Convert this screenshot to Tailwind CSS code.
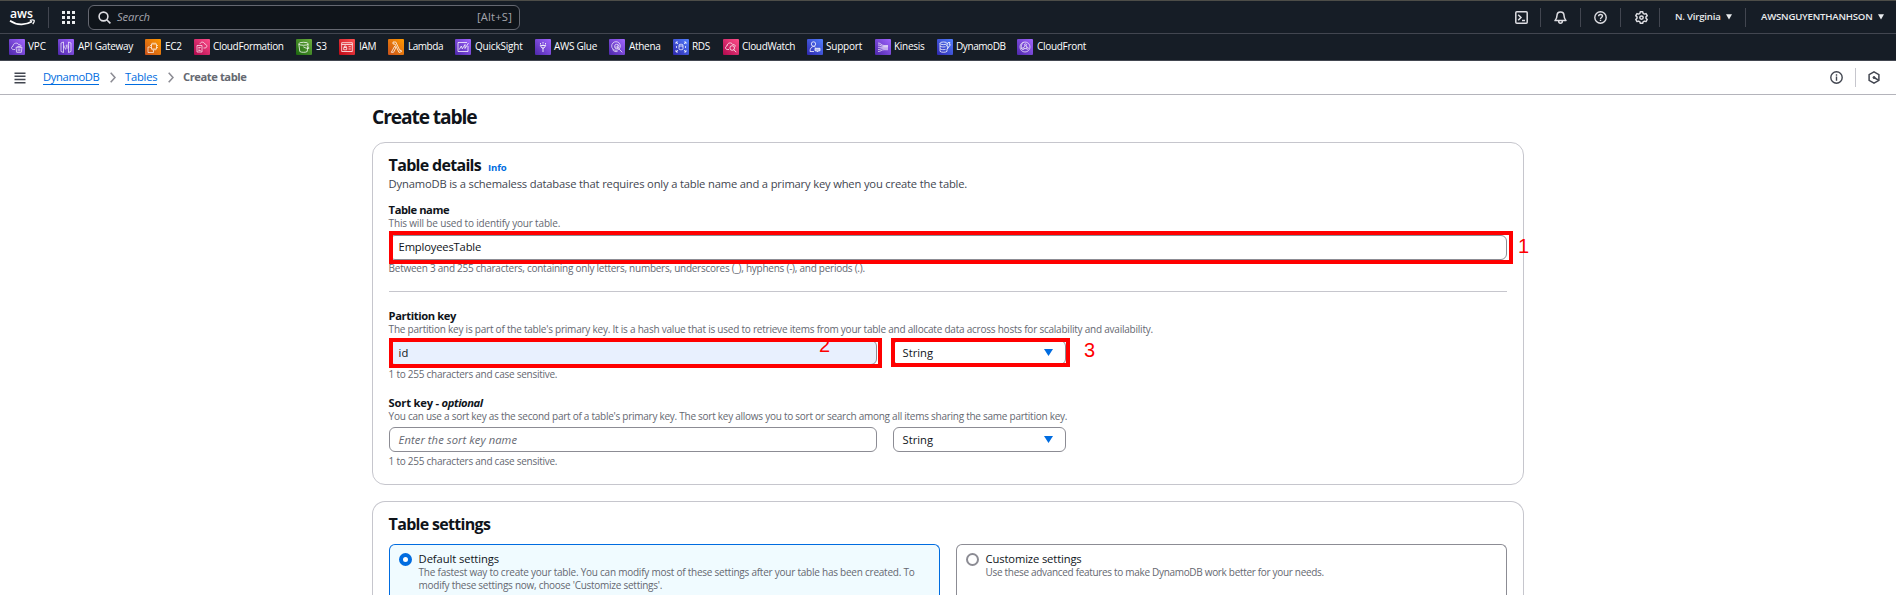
<!DOCTYPE html>
<html lang="en">
<head>
<meta charset="utf-8">
<title>Create table</title>
<script src="https://cdn.jsdelivr.net/npm/@tailwindcss/browser@4"></script>
</head>
<body class="h-[595px] overflow-hidden bg-white font-['Open_Sans',sans-serif] text-[11.2px] leading-4 text-[#0f141a] whitespace-nowrap">

<!-- Top navigation -->
<header class="flex h-[34px] items-center border-t border-b border-t-[#4d4d48] border-b-[#424650] bg-[#161d26] text-[#e9ebed]">
  <svg class="ml-[9px] w-[27px] h-[18px] overflow-visible" viewBox="0 0 27 18" fill="none" stroke="#fff">
    <text x="1" y="10" font-family="Open Sans" font-size="12" font-weight="600" fill="#fff" stroke="none" textLength="23" lengthAdjust="spacingAndGlyphs">aws</text>
    <path d="M1 12.700c6.500 4.600 15.500 4.800 22 .9" stroke-width="1.700"/>
    <path d="M20.800 12.400c1.500-.6 3.600-.6 4.200-.2.400.5-.2 2.600-1.300 4" stroke-width="1.200"/>
  </svg>
  <div class="ml-3 h-[21px] w-px bg-[#424650]"></div>
  <svg class="ml-[13px] size-[13px]" viewBox="0 0 13 13" fill="#e9ebed"><path d="M0 0h3v3H0zM5 0h3v3H5zM10 0h3v3h-3zM0 5h3v3H0zM5 5h3v3H5zM10 5h3v3h-3zM0 10h3v3H0zM5 10h3v3H5zM10 10h3v3h-3z"/></svg>
  <div class="ml-[13px] flex h-[25px] w-[432px] items-center rounded-[6px] border border-[#656871] bg-[#0f141a] pr-[7px] pl-[9px]">
    <svg class="size-[13px]" viewBox="0 0 13 13" fill="none" stroke="#dedee3" stroke-width="1.600"><circle cx="5.500" cy="5.500" r="4.400"/><path d="M8.700 8.700l3.700 3.700"/></svg>
    <span class="ml-[6px] italic text-[#a4a4ad] tracking-[-0.08px]">Search</span>
    <span class="ml-auto text-[#a4a4ad] tracking-[0.18px]">[Alt+S]</span>
  </div>
  <svg class="ml-auto size-[13px]" viewBox="0 0 13 13" fill="none" stroke="#dedee3" stroke-width="1.500"><rect x=".8" y=".8" width="11.400" height="11.400" rx="1"/><path d="M3.200 3.700l2.800 2.800-2.800 2.800M7 9.500h3"/></svg>
  <div class="ml-3 h-[19px] w-px bg-[#424650]"></div>
  <svg class="ml-[13px] size-[13px]" viewBox="0 0 13 13" fill="none" stroke="#dedee3" stroke-width="1.500" stroke-linejoin="round"><path d="M6.500 .9C4.300 .9 3 2.600 3 4.600c0 2.600-.9 3.600-2 5h11c-1.100-1.400-2-2.400-2-5C10 2.600 8.700 .9 6.500 .9zM4.700 10.200c0 2.600 3.600 2.600 3.600 0"/></svg>
  <div class="ml-[13px] h-[19px] w-px bg-[#424650]"></div>
  <svg class="ml-[13px] size-[13px]" viewBox="0 0 13 13" fill="none" stroke="#dedee3" stroke-width="1.400"><circle cx="6.500" cy="6.500" r="5.700"/><path d="M4.600 5.300c0-2.500 3.900-2.400 3.900-.2 0 1.400-2 1.400-2 2.900M6.500 8.700v1.400"/></svg>
  <div class="ml-[13px] h-[19px] w-px bg-[#424650]"></div>
  <svg class="ml-[14px] size-[13px]" viewBox="0 0 13 13" fill="none" stroke="#dedee3" stroke-width="1.500" stroke-linejoin="round"><path d="M5.300 .8h2.400l.4 1.600 1.300.7 1.600-.5 1.200 2.100-1.200 1.200v1.400l1.200 1.200-1.200 2.100-1.600-.5-1.300.7-.4 1.500H5.300l-.4-1.500-1.300-.7-1.600.5L.8 8.500 2 7.300V5.900L.8 4.700 2 2.600l1.600.5 1.300-.7z"/><circle cx="6.500" cy="6.600" r="1.700"/></svg>
  <div class="ml-[11px] h-[19px] w-px bg-[#424650]"></div>
  <div class="ml-[15px] flex w-[70px] items-center text-[9.6px] font-semibold"><span class="w-[51px] tracking-[-0.2px]">N. Virginia</span><svg class="h-[6px] w-[6px]" viewBox="0 0 6 6" fill="#e9ebed"><path d="M0 .3h6L3 5.500z"/></svg></div>
  <div class="h-[19px] w-px bg-[#424650]"></div>
  <div class="ml-[15px] mr-[12px] flex w-[123px] items-center text-[9.6px] font-semibold"><span class="w-[117px] tracking-[-0.2px]">AWSNGUYENTHANHSON</span><svg class="h-[6px] w-[6px]" viewBox="0 0 6 6" fill="#e9ebed"><path d="M0 .3h6L3 5.500z"/></svg></div>
</header>

<!-- Favourite services -->
<svg class="absolute size-0">
  <defs>
    <linearGradient id="purple" x1="0" y1="1" x2="1" y2="0"><stop stop-color="#4d27aa"/><stop offset="1" stop-color="#a166ff"/></linearGradient>
    <linearGradient id="orange" x1="0" y1="1" x2="1" y2="0"><stop stop-color="#c8511b"/><stop offset="1" stop-color="#ff9900"/></linearGradient>
    <linearGradient id="pink" x1="0" y1="1" x2="1" y2="0"><stop stop-color="#b0084d"/><stop offset="1" stop-color="#ff4f8b"/></linearGradient>
    <linearGradient id="green" x1="0" y1="1" x2="1" y2="0"><stop stop-color="#1b660f"/><stop offset="1" stop-color="#6cae3e"/></linearGradient>
    <linearGradient id="red" x1="0" y1="1" x2="1" y2="0"><stop stop-color="#bd0816"/><stop offset="1" stop-color="#ff5252"/></linearGradient>
    <linearGradient id="blue" x1="0" y1="1" x2="1" y2="0"><stop stop-color="#2e27ad"/><stop offset="1" stop-color="#527fff"/></linearGradient>
  </defs>
</svg>
<nav class="flex h-[27px] items-center border-b border-[#424650] bg-[#161d26] pl-[9px] text-[10px] font-medium text-white">
  <a class="flex w-[49px] shrink-0 items-center"><svg class="mr-[3px] size-4" viewBox="0 0 16 16" fill="none" stroke="#fff" stroke-opacity=".85" stroke-width=".8"><rect width="16" height="16" rx="1" fill="url(#purple)" stroke="none"/><path d="M6 10.500H4.500C2 10.500 2 7.500 4 7.200 4 4 8.500 3 9.700 5.700c1.500-.3 2.300.4 2.300 1.500M7 8.300h6l-.7 5H7.700zM8 8.300c.5-1.300 3.500-1.300 4 0M9.200 9.500v2.700M10.800 9.500v2.700"/></svg><span class="pb-[2px] tracking-[-0.09px]">VPC</span></a>
  <a class="flex w-[87px] shrink-0 items-center"><svg class="mr-1 size-4" viewBox="0 0 16 16" fill="none" stroke="#fff" stroke-opacity=".85" stroke-width=".8"><rect width="16" height="16" rx="1" fill="url(#purple)" stroke="none"/><path d="M5.500 3L3 4v8.500l2.500 1zM10.500 3L13 4v8.500l-2.500 1zM9 5.500L7.500 10.500M7 6.500L5.800 8 7 9.500M9.300 6.500L10.400 8 9.300 9.500"/></svg><span class="pb-[2px] tracking-[-0.27px]">API Gateway</span></a>
  <a class="flex w-[49px] shrink-0 items-center"><svg class="mr-1 size-4" viewBox="0 0 16 16" fill="none" stroke="#fff" stroke-opacity=".85" stroke-width=".8"><rect width="16" height="16" rx="1" fill="url(#orange)" stroke="none"/><rect x="6.500" y="5" width="5" height="5"/><path d="M5 8H3v5.500h5.500V11M8 5V3.500M10 5V3.500M11.500 6.500H13M11.500 8.500H13M8 10v1.500M10 10v1.500M6.500 6.500H5M6.500 8.500H5"/></svg><span class="pb-[2px] tracking-[-0.35px]">EC2</span></a>
  <a class="flex w-[102px] shrink-0 items-center"><svg class="mr-[3px] size-4" viewBox="0 0 16 16" fill="none" stroke="#fff" stroke-opacity=".85" stroke-width=".8"><rect width="16" height="16" rx="1" fill="url(#pink)" stroke="none"/><path d="M3 6.500h5V13H3zM4.300 8.500h2.400M4.300 10h1.500M4.300 11.500h2.400M6 5C6.500 2.500 10 2.500 10.700 5c2.800.3 2.800 4 .3 4H9.500"/></svg><span class="pb-[2px] tracking-[-0.34px]">CloudFormation</span></a>
  <a class="flex w-[43px] shrink-0 items-center"><svg class="mr-1 size-4" viewBox="0 0 16 16" fill="none" stroke="#fff" stroke-opacity=".85" stroke-width=".9"><rect width="16" height="16" rx="1" fill="url(#green)" stroke="none"/><ellipse cx="7.500" cy="4.800" rx="4.700" ry="1.500"/><path d="M2.800 4.800l1 7.700c1.500 1.100 6 1.100 7.400 0l1-7.700M7.300 7.800c2.500 1.500 5 2 5.700 1.500.3-.4-.6-1.200-1.400-1.600"/></svg><span class="pb-[2px] tracking-[-0.34px]">S3</span></a>
  <a class="flex w-[49px] shrink-0 items-center"><svg class="mr-1 size-4" viewBox="0 0 16 16" fill="none" stroke="#fff" stroke-opacity=".85" stroke-width=".9"><rect width="16" height="16" rx="1" fill="url(#red)" stroke="none"/><path d="M2.700 3.700h10.600v8.800H2.700zM2.700 5.500h10.600M9.500 7.700h2.300M9.500 10h2.300M4.700 8.500h3v2.300h-3zM5.300 8.500V7h1.800v1.500"/></svg><span class="pb-[2px] tracking-[-0.37px]">IAM</span></a>
  <a class="flex w-[67px] shrink-0 items-center"><svg class="mr-1 size-4" viewBox="0 0 16 16" fill="none" stroke="#fff" stroke-opacity=".85" stroke-width=".9"><rect width="16" height="16" rx="1" fill="url(#orange)" stroke="none"/><path d="M5 3h2.800l4 8.500 1.200-.4.500 1.500-2.500.9L7 5H5zM6.700 7.200L3.300 13.300h2.200l2.200-4.200z"/></svg><span class="pb-[2px] tracking-[-0.47px]">Lambda</span></a>
  <a class="flex w-[80px] shrink-0 items-center"><svg class="mr-1 size-4" viewBox="0 0 16 16" fill="none" stroke="#fff" stroke-opacity=".85" stroke-width=".9"><rect width="16" height="16" rx="1" fill="url(#purple)" stroke="none"/><path d="M12 3.500H3v9h10V7M4.300 10.500l2-3.500 1 2.800L10 5.500v4L13.500 4"/></svg><span class="pb-[2px] tracking-[-0.2px]">QuickSight</span></a>
  <a class="flex w-[74px] shrink-0 items-center"><svg class="mr-[3px] size-4" viewBox="0 0 16 16" fill="none" stroke="#fff" stroke-opacity=".85" stroke-width="1"><rect width="16" height="16" rx="1" fill="url(#purple)" stroke="none"/><path d="M5.300 6.500h5.400L9 9H7zM8 8.500v4.500M8 3v1.500M8 5.500v1M5.500 4v1.500M10.500 4v1.500"/></svg><span class="pb-[2px] tracking-[-0.26px]">AWS Glue</span></a>
  <a class="flex w-[64px] shrink-0 items-center"><svg class="mr-1 size-4" viewBox="0 0 16 16" fill="none" stroke="#fff" stroke-opacity=".85" stroke-width=".8"><rect width="16" height="16" rx="1" fill="url(#purple)" stroke="none"/><circle cx="7" cy="7" r="4.300"/><circle cx="7.700" cy="7.500" r="2.200"/><path d="M9.500 9.500l3.800 3.800M3.500 10.500c1 1.800 3 2.500 5 2M7 7v2.300M8.500 6.500v2.800"/></svg><span class="pb-[2px] tracking-[-0.3px]">Athena</span></a>
  <a class="flex w-[50px] shrink-0 items-center"><svg class="mr-[3px] size-4" viewBox="0 0 16 16" fill="none" stroke="#fff" stroke-opacity=".85" stroke-width=".9"><rect width="16" height="16" rx="1" fill="url(#blue)" stroke="none"/><path d="M3 5V3h2M3 3l2 2M11 3h2v2M13 3l-2 2M3 11v2h2M3 13l2-2M13 11v2h-2M13 13l-2-2M3.500 7v2M12.500 7v2"/><rect x="6" y="5.300" width="4" height="5.400" rx="1.200"/><path d="M6 7h4"/></svg><span class="pb-[2px] tracking-[-0.3px]">RDS</span></a>
  <a class="flex w-[84px] shrink-0 items-center"><svg class="mr-[3px] size-4" viewBox="0 0 16 16" fill="none" stroke="#fff" stroke-opacity=".85" stroke-width=".9"><rect width="16" height="16" rx="1" fill="url(#pink)" stroke="none"/><path d="M6 10.500H4.300C2 10.300 2 7.500 4 7 4.200 3.500 8.500 3 9.700 5.500c1.600-.2 2.500.5 2.600 2"/><circle cx="9.200" cy="9" r="2.300"/><path d="M10.800 10.700l2.500 2.500"/></svg><span class="pb-[2px] tracking-[-0.33px]">CloudWatch</span></a>
  <a class="flex w-[68px] shrink-0 items-center"><svg class="mr-[3px] size-4" viewBox="0 0 16 16" fill="none" stroke="#fff" stroke-opacity=".85" stroke-width=".9"><rect width="16" height="16" rx="1" fill="url(#blue)" stroke="none"/><circle cx="6.500" cy="5" r="2.200"/><path d="M7 12.500H3c0-3 1.500-5 3.500-5 .8 0 1.400.2 2 .7"/><path d="M8 9.300h5v2.500h-1.500L10.500 13l-1-1.200H8z" fill="#fff" fill-opacity=".6"/></svg><span class="pb-[2px] tracking-[-0.21px]">Support</span></a>
  <a class="flex w-[62px] shrink-0 items-center"><svg class="mr-[3px] size-4" viewBox="0 0 16 16" fill="none" stroke="#fff" stroke-opacity=".85" stroke-width=".8"><rect width="16" height="16" rx="1" fill="url(#purple)" stroke="none"/><path d="M3 4c3 0 3.500 2.500 6 2.500h4M3 6c3 0 3.500 1.500 6 1.500h4M3 8.300h10M3 10.500c3 0 3.500-1.200 6-1.200h4M3 12.500c3 0 3.500-1.800 6-1.800h4"/></svg><span class="pb-[2px] tracking-[-0.28px]">Kinesis</span></a>
  <a class="flex w-[80px] shrink-0 items-center"><svg class="mr-[3px] size-4" viewBox="0 0 16 16" fill="none" stroke="#fff" stroke-opacity=".85" stroke-width=".9"><rect width="16" height="16" rx="1" fill="url(#blue)" stroke="none"/><ellipse cx="6.500" cy="4.300" rx="3.500" ry="1.300"/><path d="M3 4.300v8c1 1.300 6 1.300 7 0V10M3 7c1 1.100 4 1.200 5.500.7M3 9.700c1 1.100 4 1.200 5.500.7M11 3.500h2l-.8 2.200h1.300L10.300 10l.7-3H9.500z"/></svg><span class="pb-[2px] tracking-[-0.42px]">DynamoDB</span></a>
  <a class="flex shrink-0 items-center"><svg class="mr-1 size-4" viewBox="0 0 16 16" fill="none" stroke="#fff" stroke-opacity=".85" stroke-width=".8"><rect width="16" height="16" rx="1" fill="url(#purple)" stroke="none"/><circle cx="8" cy="8" r="5"/><circle cx="8.500" cy="5.800" r="1"/><circle cx="6" cy="9.700" r="1"/><circle cx="10.300" cy="9.300" r="1"/><path d="M8 6.700L6.500 8.900M9 6.700l1 1.700M7 9.600h2.300M6.500 3.200C4.500 5 4 7 4.500 10"/></svg><span class="pb-[2px] tracking-[-0.3px]">CloudFront</span></a>
</nav>

<!-- Breadcrumbs -->
<div class="flex h-[34px] items-center border-b border-[#b4b4bb] pl-[14px]">
  <svg class="h-[12px] w-[12px]" viewBox="0 0 12 12" fill="#424650"><path d="M.5.500h11V2H.5zM.5 3.500h11V5H.5zM.5 6.700h11v1.500H.5zM.5 9.900h11v1.500H.5z"/></svg>
  <span class="ml-[17px] h-[15px] w-[56px] border-b border-[#006ce0] leading-[14px] tracking-[-0.34px] text-[#006ce0]">DynamoDB</span>
  <svg class="ml-[11px] h-[11px] w-[6px]" viewBox="0 0 6 11" fill="none" stroke="#8c8c94" stroke-width="1.600"><path d="M.7.8L5 5.500.7 10.200"/></svg>
  <span class="ml-[9px] h-[15px] w-[32px] border-b border-[#006ce0] leading-[14px] tracking-[-0.2px] text-[#006ce0]">Tables</span>
  <svg class="ml-[11px] h-[11px] w-[6px]" viewBox="0 0 6 11" fill="none" stroke="#8c8c94" stroke-width="1.600"><path d="M.7.8L5 5.500.7 10.200"/></svg>
  <span class="ml-[9px] pb-px font-bold tracking-[-0.43px] text-[#656871]">Create table</span>
  <svg class="ml-auto size-[13px]" viewBox="0 0 13 13" fill="none" stroke="#424650" stroke-width="1.400"><circle cx="6.500" cy="6.500" r="5.700"/><path d="M6.500 5.500v4.200M6.500 3.300v1.400"/></svg>
  <div class="ml-3 h-[19px] w-px bg-[#c6c6cd]"></div>
  <svg class="mr-[16px] ml-[12px] h-[13px] w-[12px]" viewBox="0 0 12 13" fill="none" stroke="#424650" stroke-width="1.500"><path d="M6 .9l4.900 2.700v5.800L6 12.100 1.100 9.400V3.600z"/><circle cx="6" cy="6.500" r="1" fill="#424650" stroke-width="1"/><path d="M6 6.500l4.500 2.600"/></svg>
</div>

<!-- Page content -->
<main class="mx-auto w-[1152px]">
  <h1 class="h-[47px] pt-[10px] text-[19.2px] leading-6 font-bold tracking-[-1.1px]">Create table</h1>

  <section class="relative flex h-[343px] flex-col rounded-[13px] border border-[#c6c6cd] pl-[15.600px]">
    <h2 class="mt-[12px] flex h-5 items-baseline text-base leading-5 font-bold tracking-[-0.69px]">Table details<span class="ml-[7px] text-[9.6px] tracking-[-0.16px] text-[#006ce0]">Info</span></h2>
    <p class="tracking-[-0.171px] mt-px text-[#424650]">DynamoDB is a schemaless database that requires only a table name and a primary key when you create the table.</p>
    <label class="mt-[10px] font-bold tracking-[-0.44px]">Table name</label>
    <p class="-mt-px text-[10px] leading-[13px] tracking-[-0.17px] text-[#656871]">This will be used to identify your table.</p>
    <div class="mt-[5px] flex h-[25px] w-[1118px] shrink-0 items-center rounded-[6px] border border-[#8c8c94] px-[9px] pb-[2px] tracking-[-0.165px]">EmployeesTable</div>
    <p class="mt-[2px] text-[10px] leading-[13px] tracking-[-0.255px] text-[#656871]">Between 3 and 255 characters, containing only letters, numbers, underscores (_), hyphens (-), and periods (.).</p>
    <div class="mt-[16px] h-px w-[1118px] shrink-0 bg-[#c6c6cd]"></div>

    <label class="mt-[16px] font-bold tracking-[-0.386px]">Partition key</label>
    <p class="-mt-px text-[10px] leading-[13px] tracking-[-0.224px] text-[#656871]">The partition key is part of the table's primary key. It is a hash value that is used to retrieve items from your table and allocate data across hosts for scalability and availability.</p>
    <div class="mt-[4px] flex gap-4">
      <div class="flex h-[25px] w-[488px] items-center rounded-[6px] border border-[#8c8c94] bg-[#e8f0fe] px-[9px]">id</div>
      <div class="flex h-[25px] w-[173px] items-center justify-between rounded-[6px] border border-[#8c8c94] pr-3 pl-[9px]">String<svg class="h-[7px] w-[9px]" viewBox="0 0 9 7" fill="#006ce0"><path d="M0 0h9L4.500 7z"/></svg></div>
    </div>
    <p class="mt-[3px] text-[10px] leading-[13px] tracking-[-0.257px] text-[#656871]">1 to 255 characters and case sensitive.</p>

    <label class="mt-[14px] font-bold tracking-[-0.206px]">Sort key - <i class="tracking-[-0.4px]">optional</i></label>
    <p class="-mt-px text-[10px] leading-[13px] tracking-[-0.26px] text-[#656871]">You can use a sort key as the second part of a table's primary key. The sort key allows you to sort or search among all items sharing the same partition key.</p>
    <div class="mt-[4px] flex gap-4">
      <div class="flex h-[25px] w-[488px] items-center rounded-[6px] border border-[#8c8c94] px-[9px] tracking-[0.076px] text-[#656871] italic">Enter the sort key name</div>
      <div class="flex h-[25px] w-[173px] items-center justify-between rounded-[6px] border border-[#8c8c94] pr-3 pl-[9px]">String<svg class="mb-px h-[7px] w-[9px]" viewBox="0 0 9 7" fill="#006ce0"><path d="M0 0h9L4.500 7z"/></svg></div>
    </div>
    <p class="mt-[3px] text-[10px] leading-[13px] tracking-[-0.257px] text-[#656871]">1 to 255 characters and case sensitive.</p>

    <!-- Step annotations over the form -->
    <div class="absolute top-[88px] left-[16px] h-[33px] w-[1124px] border-4 border-[#ff0000]"></div>
    <div class="absolute top-[195px] left-[16px] h-[30px] w-[493px] border-4 border-[#ff0000]"></div>
    <div class="absolute top-[195px] left-[518px] h-[29px] w-[179px] border-4 border-[#ff0000]"></div>
    <span class="absolute top-[91px] left-[1145px] font-['Liberation_Sans',sans-serif] text-[20px] leading-6 text-[#ff0000]">1</span>
    <span class="absolute top-[190px] left-[446px] font-['Liberation_Sans',sans-serif] text-[20px] leading-6 text-[#ff0000]">2</span>
    <span class="absolute top-[195px] left-[711px] font-['Liberation_Sans',sans-serif] text-[20px] leading-6 text-[#ff0000]">3</span>
  </section>

  <section class="mt-[16px] h-[94px] overflow-hidden rounded-t-[13px] border border-b-0 border-[#c6c6cd] pl-[15.600px]">
    <h2 class="mt-[12px] text-base leading-5 font-bold tracking-[-0.69px]">Table settings</h2>
    <div class="mt-[10px] flex gap-4">
      <div class="flex h-[51px] w-[551px] rounded-t-[6px] border border-b-0 border-[#006ce0] bg-[#f0fbff] pt-[6px] pl-[9px]">
        <div class="mt-[2px] size-[13px] rounded-full border-4 border-[#006ce0] bg-white"></div>
        <div class="ml-[7px]">
          <div class="tracking-[-0.071px]">Default settings</div>
          <p class="-mt-px text-[10px] leading-[13px] tracking-[-0.236px] text-[#656871]">The fastest way to create your table. You can modify most of these settings after your table has been created. To<br><span class="tracking-[-0.265px]">modify these settings now, choose 'Customize settings'.</span></p>
        </div>
      </div>
      <div class="flex h-[51px] w-[551px] rounded-t-[6px] border border-b-0 border-[#8c8c94] pt-[6px] pl-[9px]">
        <div class="mt-[2px] size-[13px] rounded-full border-2 border-[#8c8c94]"></div>
        <div class="ml-[7px]">
          <div class="tracking-[-0.126px]">Customize settings</div>
          <p class="-mt-px text-[10px] leading-[13px] tracking-[-0.316px] text-[#656871]">Use these advanced features to make DynamoDB work better for your needs.</p>
        </div>
      </div>
    </div>
  </section>
</main>
</body>
</html>
